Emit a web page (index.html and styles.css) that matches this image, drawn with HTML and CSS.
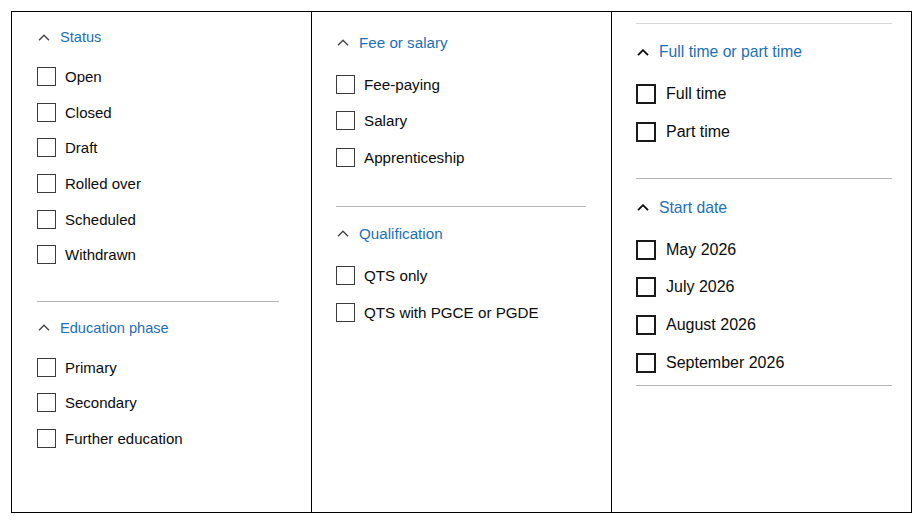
FILE: index.html
```html
<!DOCTYPE html>
<html lang="en">
<head>
<meta charset="utf-8">
<title>Filters</title>
<link rel="stylesheet" href="styles.css">
</head>
<body>
<div class="panels">
  <section class="panel p1">
    <div class="group">
      <h2 class="heading"><svg class="chev" viewBox="0 0 12 7"><path d="M1 6.2 6 1.2 11 6.2"/></svg>Status</h2>
      <ul class="options">
        <li class="option"><span class="box"></span>Open</li>
        <li class="option"><span class="box"></span>Closed</li>
        <li class="option"><span class="box"></span>Draft</li>
        <li class="option"><span class="box"></span>Rolled over</li>
        <li class="option"><span class="box"></span>Scheduled</li>
        <li class="option"><span class="box"></span>Withdrawn</li>
      </ul>
    </div>
    <hr class="rule">
    <div class="group">
      <h2 class="heading"><svg class="chev" viewBox="0 0 12 7"><path d="M1 6.2 6 1.2 11 6.2"/></svg>Education phase</h2>
      <ul class="options">
        <li class="option"><span class="box"></span>Primary</li>
        <li class="option"><span class="box"></span>Secondary</li>
        <li class="option"><span class="box"></span>Further education</li>
      </ul>
    </div>
  </section>
  <section class="panel p2">
    <div class="group">
      <h2 class="heading"><svg class="chev" viewBox="0 0 12 7"><path d="M1 6.2 6 1.2 11 6.2"/></svg>Fee or salary</h2>
      <ul class="options">
        <li class="option"><span class="box"></span>Fee-paying</li>
        <li class="option"><span class="box"></span>Salary</li>
        <li class="option"><span class="box"></span>Apprenticeship</li>
      </ul>
    </div>
    <hr class="rule">
    <div class="group">
      <h2 class="heading"><svg class="chev" viewBox="0 0 12 7"><path d="M1 6.2 6 1.2 11 6.2"/></svg>Qualification</h2>
      <ul class="options">
        <li class="option"><span class="box"></span>QTS only</li>
        <li class="option"><span class="box"></span>QTS with PGCE or PGDE</li>
      </ul>
    </div>
  </section>
  <section class="panel p3">
    <hr class="rule rule-top">
    <div class="group">
      <h2 class="heading"><svg class="chev" viewBox="0 0 12 7"><path d="M1 6.2 6 1.2 11 6.2"/></svg>Full time or part time</h2>
      <ul class="options">
        <li class="option"><span class="box"></span>Full time</li>
        <li class="option"><span class="box"></span>Part time</li>
      </ul>
    </div>
    <hr class="rule">
    <div class="group">
      <h2 class="heading"><svg class="chev" viewBox="0 0 12 7"><path d="M1 6.2 6 1.2 11 6.2"/></svg>Start date</h2>
      <ul class="options">
        <li class="option"><span class="box"></span>May 2026</li>
        <li class="option"><span class="box"></span>July 2026</li>
        <li class="option"><span class="box"></span>August 2026</li>
        <li class="option"><span class="box"></span>September 2026</li>
      </ul>
    </div>
    <hr class="rule rule-end">
  </section>
</div>
</body>
</html>
```

FILE: styles.css
```css
html, body {
  margin: 0;
  padding: 0;
  background: #ffffff;
}

body {
  font-family: "Liberation Sans", Arial, sans-serif;
  color: #0b0c0c;
}

.panels {
  display: grid;
  grid-template-columns: 300px 300px 301px;
  height: 502px;
  margin: 11px 0 0 11px;
}

.panel {
  border: 1px solid #000;
  border-right: none;
  display: flex;
  flex-direction: column;
}

.p3 {
  border-right: 1px solid #000;
}

.heading {
  margin: 0;
  display: flex;
  align-items: center;
  font-weight: 400;
  color: #1d70b8;
  height: var(--hh);
  font-size: var(--hfs);
}

.chev {
  width: 12px;
  height: 7px;
  margin-left: 1px;
  margin-right: var(--cgap);
  flex: none;
}

.chev path {
  fill: none;
  stroke: var(--chev);
  stroke-width: var(--cw);
}

.options {
  list-style: none;
  margin: var(--lgap) 0 0 0;
  padding: 0;
}

.option {
  display: flex;
  align-items: center;
  height: var(--row);
  font-size: var(--fs);
}

.box {
  box-sizing: border-box;
  width: var(--box);
  height: var(--box);
  border: var(--bw) solid var(--bc);
  margin-right: var(--tgap);
  flex: none;
}

.rule {
  border: none;
  height: 1px;
  background: #b1b4b6;
  margin: 0;
}

/* Panel 1 */
.p1 {
  --hh: 20px;
  --hfs: 14.6px;
  --fs: 15px;
  --row: 35.6px;
  --box: 19px;
  --bw: 1px;
  --bc: #3c3c3c;
  --tgap: 9px;
  --cgap: 10px;
  --lgap: 12px;
  --chev: #444;
  --cw: 1.4px;
  padding: 15px 32px 0 25px;
}

.p1 .rule {
  margin: 28px 0 16px;
}

/* Panel 2 */
.p2 {
  --hh: 20px;
  --hfs: 15.2px;
  --fs: 15.2px;
  --row: 36.5px;
  --box: 19px;
  --bw: 1px;
  --bc: #3c3c3c;
  --tgap: 9px;
  --cgap: 10px;
  --lgap: 13.8px;
  --chev: #444;
  --cw: 1.4px;
  padding: 20px 25px 0 24px;
}

.p2 .rule {
  margin: 31.2px 0 16px;
}

/* Panel 3 */
.p3 {
  --hh: 21px;
  --hfs: 15.7px;
  --fs: 16px;
  --row: 37.7px;
  --box: 20px;
  --bw: 2px;
  --bc: #1a1a1a;
  --tgap: 10px;
  --cgap: 10px;
  --lgap: 12.5px;
  --chev: #0b0c0c;
  --cw: 1.8px;
  padding: 11px 19px 0 24px;
}

.p3 .rule {
  margin: 28px 0 18px;
}

.p3 .rule-top {
  margin: 0 0 17.5px;
  background: #d6d7d8;
}

.p3 .rule-end {
  margin: 3px 0 0;
}
```
